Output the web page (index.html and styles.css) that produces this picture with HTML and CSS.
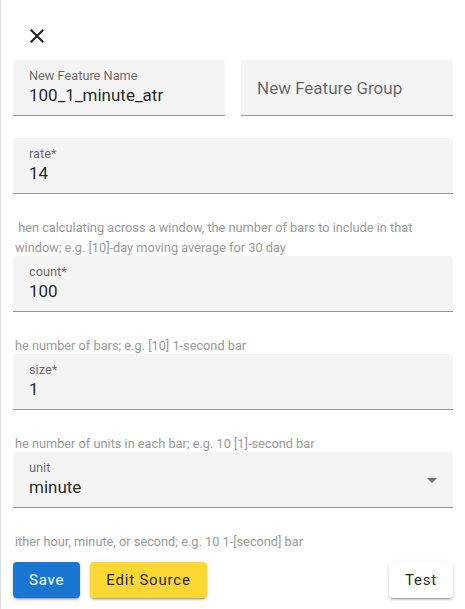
FILE: index.html
```html
<!DOCTYPE html>
<html lang="en">
<head>
  <meta charset="UTF-8" />
  <meta name="viewport" content="width=device-width, initial-scale=1.0" />
  <title>Edit Feature</title>
  <link rel="stylesheet" href="styles.css">
</head>
<body>
  <div class="panel">
    <button class="close-btn" aria-label="close">
      <svg viewBox="0 0 24 24" width="24" height="24"><path d="M19 6.41 17.59 5 12 10.59 6.41 5 5 6.41 10.59 12 5 17.59 6.41 19 12 13.41 17.59 19 19 17.59 13.41 12z"/></svg>
    </button>

    <div class="row">
      <div class="field">
        <div class="field-label">New Feature Name</div>
        <div class="field-value">100_1_minute_atr</div>
      </div>
      <div class="field">
        <div class="field-placeholder">New Feature Group</div>
      </div>
    </div>

    <div class="field field-spaced">
      <div class="field-label">rate*</div>
      <div class="field-value">14</div>
    </div>
    <p class="helper">&nbsp;hen calculating across a window, the number of bars to include in that window; e.g. [10]-day moving average for 30 day</p>

    <div class="field">
      <div class="field-label">count*</div>
      <div class="field-value">100</div>
    </div>
    <p class="helper">he number of bars; e.g. [10] 1-second bar</p>

    <div class="field">
      <div class="field-label">size*</div>
      <div class="field-value">1</div>
    </div>
    <p class="helper">he number of units in each bar; e.g. 10 [1]-second bar</p>

    <div class="field select">
      <div class="field-label">unit</div>
      <div class="field-value">minute</div>
      <svg class="select-arrow" viewBox="0 0 24 24" width="24" height="24"><path d="M7 10l5 5 5-5z"/></svg>
    </div>
    <p class="helper">ither hour, minute, or second; e.g. 10 1-[second] bar</p>

    <div class="actions">
      <button class="btn btn-save">Save</button>
      <button class="btn btn-source">Edit Source</button>
      <button class="btn btn-test">Test</button>
    </div>
  </div>
</body>
</html>
```

FILE: styles.css
```css
* {
  box-sizing: border-box;
}

body {
  margin: 0;
  font-family: Roboto, "Noto Sans", sans-serif;
  color: rgba(0, 0, 0, 0.87);
  background: #fff;
}

.panel {
  min-height: 609px;
  border-left: 1px solid #dcdcdc;
  padding: 16px 12px 0 12px;
}

.close-btn {
  display: block;
  width: 40px;
  height: 40px;
  margin-left: 4px;
  padding: 8px;
  border: none;
  background: none;
  fill: rgba(0, 0, 0, 0.87);
}

.close-btn svg {
  display: block;
}

.row {
  display: flex;
  gap: 16px;
  margin-top: 4px;
}

.row .field {
  flex: 1;
}

.field {
  position: relative;
  height: 56px;
  padding: 8px 16px 0;
  background: #f4f4f4;
  border-radius: 4px 4px 0 0;
  border-bottom: 1px solid #949494;
}

.field-spaced {
  margin-top: 22px;
}

.field-label {
  font-size: 12.75px;
  line-height: 15px;
  color: rgba(0, 0, 0, 0.6);
}

.field-value {
  margin-top: 2px;
  font-size: 17px;
  line-height: 20px;
}

.field-placeholder {
  margin-top: 10px;
  font-size: 17px;
  line-height: 20px;
  color: rgba(0, 0, 0, 0.6);
}

.select-arrow {
  position: absolute;
  right: 9px;
  top: 16px;
  fill: rgba(0, 0, 0, 0.54);
}

.helper {
  margin: 24px 0 -2px;
  padding-left: 2px;
  font-size: 12.75px;
  line-height: 20px;
  color: #999;
}

.actions {
  display: flex;
  gap: 10px;
  margin-top: 12px;
}

.btn {
  height: 36px;
  min-width: 64px;
  padding: 6px 16px;
  border: none;
  border-radius: 4px;
  font-family: Roboto, "Noto Sans", sans-serif;
  font-size: 15px;
  font-weight: 400;
  letter-spacing: 0.8px;
  color: rgba(0, 0, 0, 0.87);
  box-shadow: 0 3px 1px -2px rgba(0, 0, 0, 0.2), 0 2px 2px 0 rgba(0, 0, 0, 0.14), 0 1px 5px 0 rgba(0, 0, 0, 0.12);
  cursor: pointer;
}

.btn-save {
  background: #1976d2;
  color: #fff;
}

.btn-source {
  background: #fdd835;
}

.btn-test {
  margin-left: auto;
  background: #fff;
}
```
